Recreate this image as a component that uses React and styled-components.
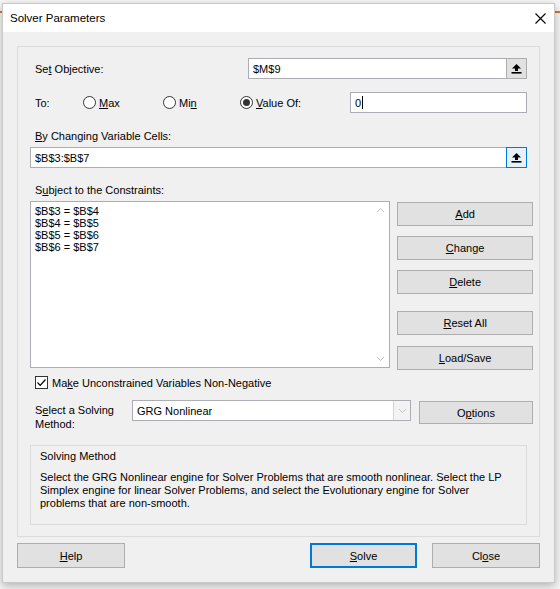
import React from 'react';
import styled, { createGlobalStyle } from 'styled-components';

const GlobalStyle = createGlobalStyle`
  html, body {
    margin: 0;
    padding: 0;
    background: #f6f6f6;
  }
  * { box-sizing: border-box; }
`;

// backdrop behind the dialog (excel window)
const Page = styled.div`
  position: relative;
  width: 560px;
  height: 589px;
  padding: 3px 5px 0 2px;
  background: #f6f6f6;
  font-family: "Liberation Sans", Arial, sans-serif;
  font-size: 11px;
  color: #000;
  overflow: hidden;
`;

const Ribbon = styled.div`
  position: absolute;
  left: 0;
  right: 0;
  top: 11px;
  height: 2px;
  background: #d9782b;
`;

const Dialog = styled.div`
  position: relative;
  width: 553px;
  height: 580px;
  background: #f0f0f0;
  border: 1px solid #c9c9c9;
  box-shadow: 0 3px 9px rgba(0, 0, 0, 0.28);
  display: flex;
  flex-direction: column;
`;

const TitleBar = styled.div`
  height: 28px;
  background: #fff;
  display: flex;
  align-items: center;
  justify-content: space-between;
  padding: 0 8px 0 7px;
  font-size: 11.5px;
`;

const Body = styled.div`
  flex: 1;
  padding: 14px 14px 0;
  display: flex;
  flex-direction: column;
`;

const Panel = styled.div`
  height: 491px;
  border: 1px solid #dcdcdc;
  padding: 11px 6px 0 12px;
  display: flex;
  flex-direction: column;
`;

const U = styled.span`
  text-decoration: underline;
  text-underline-offset: 1px;
`;

const Row = styled.div`
  display: flex;
  align-items: ${p => p.$align || 'center'};
  height: ${p => (p.$h ? `${p.$h}px` : 'auto')};
  margin-top: ${p => p.$mt || 0}px;
`;

const FieldLabel = styled.div`
  width: ${p => p.$w}px;
  flex-shrink: 0;
  padding-left: 5px;
  line-height: 14px;
`;

const Caption = styled.div`
  padding-left: 5px;
  line-height: 14px;
  margin-top: ${p => p.$mt || 0}px;
`;

const RefField = styled.div`
  display: flex;
  width: ${p => p.$w}px;
  height: 21px;
  margin-top: ${p => p.$mt || 0}px;
`;

const TextBox = styled.div`
  flex: 1;
  height: 21px;
  background: #fff;
  border: 1px solid #abadb3;
  border-right: ${p => (p.$full ? '1px solid #abadb3' : 'none')};
  display: flex;
  align-items: center;
  padding-left: 4px;
  width: ${p => (p.$w ? `${p.$w}px` : 'auto')};
  flex: ${p => (p.$w ? 'none' : 1)};
`;

const Caret = styled.span`
  display: inline-block;
  width: 1px;
  height: 13px;
  background: #000;
  margin-left: 1px;
`;

const RefButton = styled.div`
  width: 21px;
  height: 21px;
  display: flex;
  align-items: center;
  justify-content: center;
  background: ${p => (p.$focus ? '#e5f1fb' : '#e1e1e1')};
  border: 1px solid ${p => (p.$focus ? '#0078d7' : '#adadad')};
`;

const RadioOption = styled.label`
  width: ${p => p.$w}px;
  flex-shrink: 0;
  display: flex;
  align-items: center;
  gap: 3px;
`;

const RadioCircle = styled.span`
  width: 13px;
  height: 13px;
  border-radius: 50%;
  border: 1px solid #333;
  background: #fff;
  display: flex;
  align-items: center;
  justify-content: center;
  &::after {
    content: '';
    width: 7px;
    height: 7px;
    border-radius: 50%;
    background: ${p => (p.$checked ? '#333' : 'transparent')};
  }
`;

const ListRow = styled.div`
  display: flex;
  height: 170px;
  margin-top: 4px;
`;

const ListBox = styled.div`
  width: 361px;
  height: 167px;
  background: #fff;
  border: 1px solid #abadb3;
  display: flex;
`;

const ListItems = styled.div`
  flex: 1;
  padding: 3px 0 0 4px;
  line-height: 12px;
`;

const ScrollBar = styled.div`
  width: 17px;
  display: flex;
  flex-direction: column;
  justify-content: space-between;
  align-items: center;
  padding: 5px 0 5px;
`;

const SideButtons = styled.div`
  margin-left: 7px;
  width: 136px;
  display: flex;
  flex-direction: column;
`;

const Button = styled.div`
  width: ${p => (p.$w ? `${p.$w}px` : '100%')};
  height: ${p => p.$h || 24}px;
  margin-top: ${p => p.$mt || 0}px;
  margin-left: ${p => p.$ml || 0};
  flex-shrink: 0;
  background: #e1e1e1;
  border: 1px solid ${p => (p.$default ? '#0078d7' : '#adadad')};
  box-shadow: ${p => (p.$default ? 'inset 0 0 0 1px #0078d7' : 'none')};
  display: flex;
  align-items: center;
  justify-content: center;
`;

const CheckRow = styled.label`
  display: flex;
  align-items: center;
  gap: 4px;
  height: 13px;
  margin-top: 5px;
  padding-left: 5px;
`;

const CheckBox = styled.span`
  width: 13px;
  height: 13px;
  border: 1px solid #333;
  background: #fff;
  display: flex;
  align-items: center;
  justify-content: center;
`;

const MethodLabel = styled.div`
  width: 102px;
  flex-shrink: 0;
  padding: 4px 0 0 5px;
  line-height: 14px;
`;

const Select = styled.div`
  width: 279px;
  height: 21px;
  margin-top: 1px;
  background: #fff;
  border: 1px solid #abadb3;
  display: flex;
  align-items: center;
  padding-left: 4px;
`;

const SelectText = styled.span`
  flex: 1;
`;

const SelectArrow = styled.div`
  width: 17px;
  height: 19px;
  border-left: 1px solid #d4d4d4;
  background: #f3f3f3;
  display: flex;
  align-items: center;
  justify-content: center;
`;

const GroupBox = styled.div`
  width: 497px;
  height: 80px;
  margin-top: 14px;
  border: 1px solid #dcdcdc;
  padding: 3px 9px 0;
`;

const GroupTitle = styled.div`
  line-height: 14px;
`;

const GroupText = styled.div`
  margin-top: 8px;
  line-height: 13px;
`;

const Footer = styled.div`
  display: flex;
  margin-top: 6px;
`;

const UpIcon = () => (
  <svg width="11" height="11" viewBox="0 0 11 11">
    <path d="M5.5 1 L10 5.5 L7 5.5 L7 8 L4 8 L4 5.5 L1 5.5 Z" fill="#000" />
    <rect x="0.5" y="9" width="10" height="1.6" fill="#000" />
  </svg>
);

const Chevron = ({ up }) => (
  <svg width="9" height="6" viewBox="0 0 9 6">
    <path d={up ? 'M1 5 L4.5 1.5 L8 5' : 'M1 1 L4.5 4.5 L8 1'} fill="none" stroke="#c2c2c2" strokeWidth="1" />
  </svg>
);

const CloseIcon = () => (
  <svg width="11" height="11" viewBox="0 0 11 11">
    <path d="M0.5 0.5 L10.5 10.5 M10.5 0.5 L0.5 10.5" stroke="#000" strokeWidth="1.1" />
  </svg>
);

const CheckMark = () => (
  <svg width="11" height="11" viewBox="0 0 11 11">
    <path d="M1.5 5.5 L4.2 8.3 L9.5 2.5" fill="none" stroke="#000" strokeWidth="1.2" />
  </svg>
);

const constraints = ['$B$3 = $B$4', '$B$4 = $B$5', '$B$5 = $B$6', '$B$6 = $B$7'];

export default function App() {
  return (
    <Page>
      <GlobalStyle />
      <Ribbon />
      <Dialog>
        <TitleBar>
          <span>Solver Parameters</span>
          <CloseIcon />
        </TitleBar>
        <Body>
          <Panel>
            <Row $h={21}>
              <FieldLabel $w={218}>Se<U>t</U> Objective:</FieldLabel>
              <RefField $w={279}>
                <TextBox>$M$9</TextBox>
                <RefButton><UpIcon /></RefButton>
              </RefField>
            </Row>

            <Row $h={21} $mt={13}>
              <FieldLabel $w={53}>To:</FieldLabel>
              <RadioOption $w={80}><RadioCircle /><span><U>M</U>ax</span></RadioOption>
              <RadioOption $w={77}><RadioCircle /><span>Mi<U>n</U></span></RadioOption>
              <RadioOption $w={110}><RadioCircle $checked /><span><U>V</U>alue Of:</span></RadioOption>
              <TextBox $full $w={177}>0<Caret /></TextBox>
            </Row>

            <Caption $mt={16}><U>B</U>y Changing Variable Cells:</Caption>
            <RefField $w={497} $mt={4}>
              <TextBox>$B$3:$B$7</TextBox>
              <RefButton $focus><UpIcon /></RefButton>
            </RefField>

            <Caption $mt={15}>S<U>u</U>bject to the Constraints:</Caption>
            <ListRow>
              <ListBox>
                <ListItems>
                  {constraints.map(c => <div key={c}>{c}</div>)}
                </ListItems>
                <ScrollBar>
                  <Chevron up />
                  <Chevron />
                </ScrollBar>
              </ListBox>
              <SideButtons>
                <Button $mt={1}><span><U>A</U>dd</span></Button>
                <Button $mt={10}><span><U>C</U>hange</span></Button>
                <Button $mt={10}><span><U>D</U>elete</span></Button>
                <Button $mt={17}><span><U>R</U>eset All</span></Button>
                <Button $mt={11}><span><U>L</U>oad/Save</span></Button>
              </SideButtons>
            </ListRow>

            <CheckRow>
              <CheckBox><CheckMark /></CheckBox>
              <span>Ma<U>k</U>e Unconstrained Variables Non-Negative</span>
            </CheckRow>

            <Row $align="flex-start" $mt={10}>
              <MethodLabel>S<U>e</U>lect a Solving<br />Method:</MethodLabel>
              <Select>
                <SelectText>GRG Nonlinear</SelectText>
                <SelectArrow><Chevron /></SelectArrow>
              </Select>
              <Button $w={114} $h={23} $mt={2} $ml="8px"><span>O<U>p</U>tions</span></Button>
            </Row>

            <GroupBox>
              <GroupTitle>Solving Method</GroupTitle>
              <GroupText>
                Select the GRG Nonlinear engine for Solver Problems that are smooth nonlinear. Select the LP<br />
                Simplex engine for linear Solver Problems, and select the Evolutionary engine for Solver<br />
                problems that are non-smooth.
              </GroupText>
            </GroupBox>
          </Panel>

          <Footer>
            <Button $w={108} $h={25}><span><U>H</U>elp</span></Button>
            <Button $w={107} $h={25} $ml="auto" $default><span><U>S</U>olve</span></Button>
            <Button $w={108} $h={25} $ml="15px"><span>Cl<U>o</U>se</span></Button>
          </Footer>
        </Body>
      </Dialog>
    </Page>
  );
}
